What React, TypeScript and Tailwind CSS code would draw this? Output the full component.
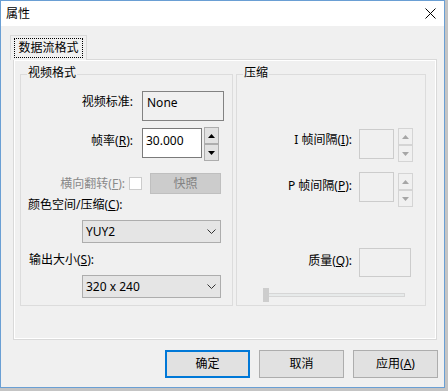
import React from "react";

const Close = () => (
  <svg width="11" height="11" viewBox="0 0 11 11">
    <path d="M0.5 0.5 L10.5 10.5 M10.5 0.5 L0.5 10.5" stroke="#000" strokeWidth="1" />
  </svg>
);

const Chevron = () => (
  <svg width="9" height="5" viewBox="0 0 9 5">
    <polyline points="0.5,0.5 4.5,4.5 8.5,0.5" fill="none" stroke="#333" strokeWidth="1" />
  </svg>
);

const Arrow = ({ up, color }: { up: boolean; color: string }) => (
  <svg width="7" height="4" viewBox="0 0 7 4">
    <polygon points={up ? "3.5,0 7,4 0,4" : "0,0 7,0 3.5,4"} fill={color} />
  </svg>
);

const Spin = ({ disabled }: { disabled?: boolean }) => {
  const btn = disabled
    ? "h-[17px] w-[15px] border border-[#d4d4d4] bg-[#f0f0f0] flex items-center justify-center"
    : "h-[17px] w-[15px] border border-[#adadad] bg-[#e1e1e1] flex items-center justify-center";
  const c = disabled ? "#a6a6a6" : "#000";
  return (
    <div className="flex flex-col">
      <div className={btn}>
        <Arrow up color={c} />
      </div>
      <div className={btn}>
        <Arrow up={false} color={c} />
      </div>
    </div>
  );
};

const Select = ({ value }: { value: string }) => (
  <div className="ml-[61px] flex h-[23px] w-[139px] items-center justify-between border border-[#adadad] bg-[#e5e5e5] pl-[3px] pr-[4px]">
    <span>{value}</span>
    <Chevron />
  </div>
);

const GroupBox = ({
  title,
  className,
  children,
}: {
  title: string;
  className: string;
  children: React.ReactNode;
}) => (
  <div className={"relative h-[232px] border border-[#dcdcdc] " + className}>
    <span className="absolute left-[6px] top-[-10px] bg-[#f0f0f0] px-[1px] leading-[16px]">
      {title}
    </span>
    {children}
  </div>
);

const Button = ({ children, primary }: { children: React.ReactNode; primary?: boolean }) => (
  <div
    className={
      "flex h-[28px] w-[85px] items-center justify-center bg-[#e1e1e1] " +
      (primary ? "border-2 border-[#0078d7]" : "border border-[#adadad]")
    }
  >
    {children}
  </div>
);

export default function App() {
  return (
    <div className="h-[391px] w-[448px] bg-[#c4c4c4] font-['Noto_Sans','Noto_Sans_CJK_SC',sans-serif] text-[12px] leading-[16px] text-black">
      <div className="flex h-[388px] w-[445px] flex-col border border-[#6a9fd4] bg-[#f0f0f0]">
        {/* title bar */}
        <div className="flex h-[25px] items-center justify-between bg-white pl-[5px] pr-[8px]">
          <span>属性</span>
          <Close />
        </div>

        {/* tab + page */}
        <div className="flex flex-col pl-[12px] pt-[9px]">
          <div className="relative z-10 -mb-[1px] ml-[-3px] h-[25px] w-[77px] border-x border-t border-[#d9d9d9] bg-[#f0f0f0] px-[3px] pt-[2px]">
            <div className="flex h-[20px] items-center justify-center border border-dotted border-black">
              数据流格式
            </div>
          </div>
          <div className="h-[281px] w-[424px] border border-[#d9d9d9]">
            <div className="flex h-full border border-white pl-[5px] pt-[13px]">
              {/* 视频格式 */}
              <GroupBox title="视频格式" className="w-[213px]">
                <div className="flex flex-col">
                  <div className="mt-[16px] flex items-start">
                    <span className="mt-[3px] w-[112px] text-right">视频标准:</span>
                    <div className="ml-[9px] h-[30px] w-[82px] border border-[#828282] bg-[#f0f0f0] pl-[4px] pt-[3px]">
                      None
                    </div>
                  </div>
                  <div className="mt-[7px] flex items-start">
                    <span className="mt-[5px] w-[112px] text-right">
                      帧率(<u className="underline-offset-[1px]">R</u>):
                    </span>
                    <div className="ml-[9px] h-[30px] w-[60px] border border-[#7a7a7a] bg-white pl-[3px] pt-[4px]">
                      30.000
                    </div>
                    <div className="ml-[2px] mt-[-1px]">
                      <Spin />
                    </div>
                  </div>
                  <div className="mt-[12px] flex h-[21px] items-center">
                    <span className="w-[104px] text-right text-[#8a8a8a]">
                      横向翻转(<u className="underline-offset-[1px]">F</u>):
                    </span>
                    <div className="ml-[4px] h-[13px] w-[13px] border border-[#cccccc] bg-white" />
                    <div className="ml-[8px] flex h-[21px] w-[71px] items-center justify-center border border-[#bfbfbf] bg-[#cccccc] text-[#838383]">
                      快照
                    </div>
                  </div>
                  <span className="mt-[3px] pl-[7px]">
                    颜色空间/压缩(<u className="underline-offset-[1px]">C</u>):
                  </span>
                  <div className="mt-[7px]">
                    <Select value="YUY2" />
                  </div>
                  <span className="mt-[9px] pl-[8px]">
                    输出大小(<u className="underline-offset-[1px]">S</u>):
                  </span>
                  <div className="mt-[7px]">
                    <Select value="320 x 240" />
                  </div>
                </div>
              </GroupBox>

              {/* 压缩 */}
              <GroupBox title="压缩" className="ml-[3px] w-[190px]">
                <div className="flex flex-col">
                  <div className="mt-[54px] flex items-start">
                    <span className="mt-[3px] w-[115px] text-right">
                      I 帧间隔(<u className="underline-offset-[1px]">I</u>):
                    </span>
                    <div className="ml-[7px] h-[30px] w-[35px] border border-[#cccccc] bg-[#f0f0f0]" />
                    <div className="ml-[4px] mt-[-1px]">
                      <Spin disabled />
                    </div>
                  </div>
                  <div className="mt-[10px] flex items-start">
                    <span className="mt-[6px] w-[115px] text-right">
                      P 帧间隔(<u className="underline-offset-[1px]">P</u>):
                    </span>
                    <div className="ml-[7px] h-[30px] w-[35px] border border-[#cccccc] bg-[#f0f0f0]" />
                    <div className="ml-[4px] mt-[1px]">
                      <Spin disabled />
                    </div>
                  </div>
                  <div className="mt-[41px] flex items-start">
                    <span className="mt-[5px] w-[115px] text-right">
                      质量(<u className="underline-offset-[1px]">Q</u>):
                    </span>
                    <div className="ml-[7px] h-[29px] w-[52px] border border-[#cccccc] bg-[#f0f0f0]" />
                  </div>
                  <div className="relative ml-[26px] mt-[11px] flex h-[14px] w-[142px] items-center">
                    <div className="h-[4px] w-full border border-[#d6d6d6] bg-[#e7eaea]" />
                    <div className="absolute left-0 top-0 h-[14px] w-[6px] bg-[#cdcdcd]" />
                  </div>
                </div>
              </GroupBox>
            </div>
          </div>
        </div>

        {/* buttons */}
        <div className="mt-[10px] flex justify-end gap-[9px] pr-[6px]">
          <Button primary>确定</Button>
          <Button>取消</Button>
          <Button>
            <span>
              应用(<u className="underline-offset-[1px]">A</u>)
            </span>
          </Button>
        </div>
      </div>
    </div>
  );
}
